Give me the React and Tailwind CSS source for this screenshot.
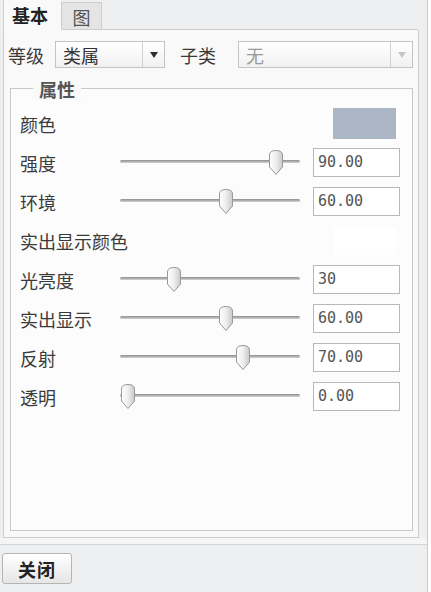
import React from "react";

const CJK = "font-['Noto_Sans_CJK_SC','Noto_Sans_CJK_JP',sans-serif]";

const ROWS = [
  { label: "强度", value: "90.00", pos: 0.9 },
  { label: "环境", value: "60.00", pos: 0.6 },
  { heading: "实出显示颜色" },
  { label: "光亮度", value: "30", pos: 0.28 },
  { label: "实出显示", value: "60.00", pos: 0.6 },
  { label: "反射", value: "70.00", pos: 0.7 },
  { label: "透明", value: "0.00", pos: 0 },
];

function Thumb() {
  return (
    <svg width="16" height="27" viewBox="0 0 16 27">
      <defs>
        <linearGradient id="thumbFill" x1="0" y1="0" x2="1" y2="0">
          <stop offset="0" stopColor="#ffffff" />
          <stop offset="0.5" stopColor="#eeeeee" />
          <stop offset="1" stopColor="#c9c9c9" />
        </linearGradient>
      </defs>
      <path
        d="M1.5 6 Q1.5 1.5 8 1.5 Q14.5 1.5 14.5 6 V18 L8 25.5 L1.5 18 Z"
        fill="url(#thumbFill)"
        stroke="#999999"
        strokeWidth="1"
      />
    </svg>
  );
}

function Slider({ pos }) {
  return (
    <div className="relative h-[27px] w-[180px]">
      <div className="absolute left-0 right-0 top-[11px] h-[3px] rounded-full bg-gradient-to-b from-[#8d8d8d] to-[#d4d4d4]" />
      <div className="absolute top-0" style={{ left: `${pos * 164}px` }}>
        <Thumb />
      </div>
    </div>
  );
}

function Select({ text, disabled, width }) {
  return (
    <div
      className={`flex h-[27px] border border-[#c4c4c4] bg-gradient-to-b from-white to-[#f1f1f1] ${width}`}
    >
      <div
        className={`flex flex-1 items-center pl-[7px] text-[18px] leading-none ${
          disabled ? "text-[#9a9a9a]" : "text-[#333]"
        }`}
      >
        {text}
      </div>
      <div className="flex w-[22px] items-center justify-center border-l border-[#d2d2d2]">
        <div
          className={`h-0 w-0 border-l-[4px] border-r-[4px] border-t-[6px] border-l-transparent border-r-transparent ${
            disabled ? "border-t-[#c4c4c4]" : "border-t-[#2e2e2e]"
          }`}
        />
      </div>
    </div>
  );
}

function Row({ row }) {
  if (row.heading) {
    return (
      <div className="flex h-[39px] items-center">
        <div className="text-[18px] leading-none">{row.heading}</div>
        <div className="ml-auto mr-[5px] h-[28px] w-[63px] bg-white" />
      </div>
    );
  }
  return (
    <div className="flex h-[39px] items-center">
      <div className="w-[100px] text-[18px] leading-none">{row.label}</div>
      <Slider pos={row.pos} />
      <div className="ml-[13px] flex h-[29px] w-[87px] items-center border border-[#b8b8b8] bg-white pl-[4px] font-['DejaVu_Sans_Mono',monospace] text-[15px] text-[#555]">
        {row.value}
      </div>
    </div>
  );
}

export default function App() {
  return (
    <div className={`flex h-[592px] w-[431px] bg-white text-[#3a3a3a] ${CJK}`}>
      <div className="flex w-[428px] flex-col border-r border-[#c9c9c9] bg-[#eeeff1]">
        {/* Tabs */}
        <div className="flex h-[30px] pl-[3px]">
          <div className="w-[58px] border-l border-[#d0d0d0] bg-[#f9f9f9] pl-[8px] pt-[6px] text-[18px] font-bold leading-none text-[#222]">
            基本
          </div>
          <div className="mt-[2px] flex w-[41px] items-center justify-center border border-[#cdcdcd] bg-[#e4e4e4] pt-[2px] text-[18px] leading-none text-[#555]">
            图
          </div>
          <div className="w-[316px] border-b border-[#cdcdcd]" />
        </div>

        {/* Panel */}
        <div className="ml-[3px] flex h-[508px] w-[416px] flex-col border border-t-0 border-[#cdcdcd] bg-[#f9f9f9]">
          <div className="mt-[11px] flex items-center pl-[4px]">
            <div className="w-[47px] text-[18px] leading-none">等级</div>
            <Select text="类属" width="w-[110px]" />
            <div className="ml-[15px] w-[58px] text-[18px] leading-none">子类</div>
            <Select text="无" disabled width="w-[175px]" />
          </div>

          {/* Group box */}
          <div className="relative ml-[6px] mt-[20px] h-[443px] w-[403px] border border-[#c8c8c8] bg-[#fcfcfc] pl-[9px] pr-[11px] pt-[15px]">
            <div className="absolute -top-[11px] left-[22px] bg-[#f9f9f9] px-[6px] text-[18px] font-bold leading-[22px] text-[#555]">
              属性
            </div>
            <div className="flex h-[39px] items-center">
              <div className="text-[18px] leading-none">颜色</div>
              <div className="ml-auto mr-[5px] h-[31px] w-[63px] bg-[#aab6c4]" />
            </div>
            {ROWS.map((row, i) => (
              <Row key={i} row={row} />
            ))}
          </div>
        </div>

        {/* Footer */}
        <div className="h-[7px] border-b border-[#d4d4d4] bg-[#f5f5f5]" />
        <div className="flex-1 pl-[2px] pt-[8px]">
          <button className="flex h-[31px] w-[70px] items-center justify-center rounded-[3px] border border-[#b4b4b4] bg-gradient-to-b from-white to-[#e6e6e6] text-[18px] font-bold leading-none tracking-[1px] text-[#222]">
            关闭
          </button>
        </div>
      </div>
    </div>
  );
}
